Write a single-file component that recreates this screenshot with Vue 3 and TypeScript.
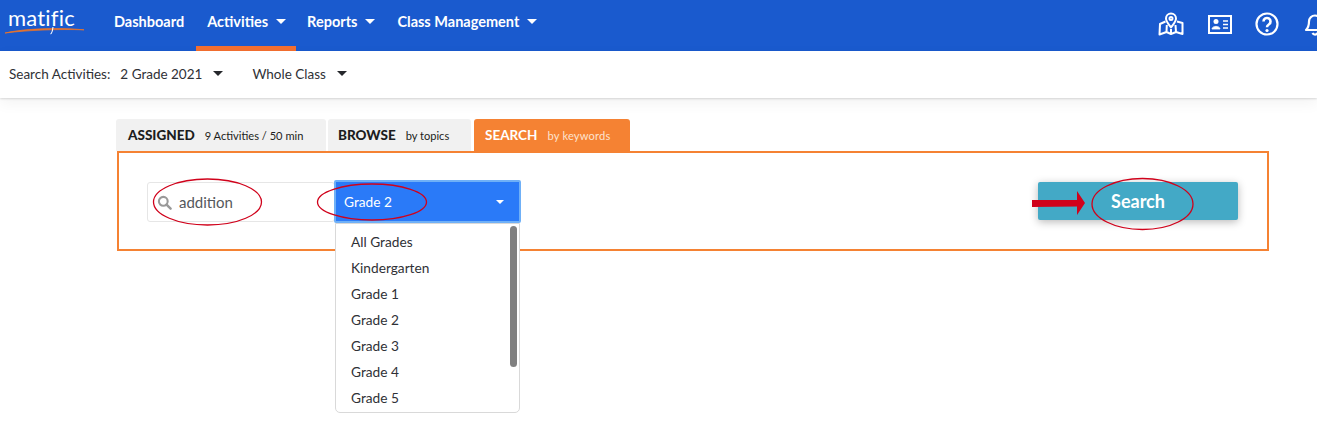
<script setup lang="ts">
const navItems: { label: string; caret: boolean; active: boolean }[] = [
  { label: 'Dashboard', caret: false, active: false },
  { label: 'Activities', caret: true, active: true },
  { label: 'Reports', caret: true, active: false },
  { label: 'Class Management', caret: true, active: false },
]
const grades: string[] = ['All Grades', 'Kindergarten', 'Grade 1', 'Grade 2', 'Grade 3', 'Grade 4', 'Grade 5']
</script>

<template>
  <div class="page">
    <header class="topbar">
      <div class="logo">
        <span class="logo-text">matific</span>
        <svg class="swoosh" width="84" height="14" viewBox="0 0 84 14" fill="none">
          <path d="M1 6 C 20 1.500, 55 0.500, 80 2.800 C 55 2, 25 3, 1 6 Z" fill="#e8732c" stroke="#e8732c" stroke-width="0.8" />
          <path d="M49 0 C48.500 4 48 6.500 46.500 7" stroke="#fff" stroke-width="1.100" />
        </svg>
      </div>
      <nav class="nav">
        <a v-for="item in navItems" :key="item.label" class="nav-item" :class="{ active: item.active }">
          {{ item.label }}
          <span v-if="item.caret" class="caret white"></span>
        </a>
      </nav>
      <div class="top-icons">
        <svg width="26" height="24" viewBox="0 0 26 24" fill="none" stroke="#fff" stroke-width="2" stroke-linejoin="round">
          <path d="M13 15.500 C10 11.500 8 9.500 8 6.500 a5 5 0 0 1 10 0 C18 9.500 16 11.500 13 15.500 Z" />
          <circle cx="13" cy="6.500" r="1.500" />
          <path d="M7.500 9.500 L2 12 L1.500 22.500 L8.500 20 L13 22 L18 20 L24.500 22 L24.500 11 L19 9.500 M8.500 20 L8.800 13 M18 20 L17.500 13 M13 22 L13 17" />
        </svg>
        <svg width="24" height="19" viewBox="0 0 24 19" fill="none" stroke="#fff">
          <rect x="1" y="1" width="22" height="17" stroke-width="2" />
          <circle cx="8" cy="6.500" r="2.500" fill="#fff" stroke="none" />
          <path d="M4 14 C4 10.500 12 10.500 12 14 Z" fill="#fff" stroke-width="0.800" />
          <path d="M15 6 H20 M15 9.500 H20 M15 13 H20" stroke-width="1.400" />
        </svg>
        <svg width="24" height="24" viewBox="0 0 24 24" fill="none" stroke="#fff" stroke-width="2.200">
          <circle cx="12" cy="12" r="10.500" />
          <path d="M8.500 9.500 a3.500 3.500 0 1 1 5.300 3 c-1.200 .8 -1.800 1.300 -1.800 2.800" stroke-width="2.600" />
          <circle cx="12" cy="18.500" r="1.600" fill="#fff" stroke="none" />
        </svg>
        <svg class="bell" width="24" height="24" viewBox="0 0 24 24" fill="none" stroke="#fff" stroke-width="2.200" stroke-linejoin="round">
          <path d="M3 18 C6 15 6 12 6 9.500 a6 6 0 0 1 12 0 C18 12 18 15 21 18 Z" />
          <path d="M9.500 21 a2.800 2.800 0 0 0 5 0" />
        </svg>
      </div>
    </header>

    <div class="subbar">
      <span class="sub-label">Search Activities:</span>
      <span class="sub-select first">2 Grade 2021<span class="caret dark"></span></span>
      <span class="sub-select">Whole Class<span class="caret dark"></span></span>
    </div>

    <main class="content">
      <div class="tabs">
        <div class="tab assigned"><b>ASSIGNED</b><small>9 Activities / 50 min</small></div>
        <div class="tab browse"><b>BROWSE</b><small>by topics</small></div>
        <div class="tab search"><b>SEARCH</b><small>by keywords</small></div>
      </div>
      <section class="panel">
        <div class="input">
          <svg width="15" height="15" viewBox="0 0 16 16" fill="none" stroke="#999" stroke-width="2.200">
            <circle cx="6.700" cy="6.700" r="4.700" />
            <path d="M10.200 10.200 L14.500 14.500" stroke-width="2.600" stroke-linecap="round" />
          </svg>
          <span>addition</span>
        </div>
        <div class="select-wrap">
          <div class="select">
            <span>Grade 2</span>
            <span class="caret small"></span>
          </div>
          <div class="menu">
            <div v-for="g in grades" :key="g" class="menu-item">{{ g }}</div>
            <div class="scrollbar"></div>
          </div>
        </div>
        <button class="search-btn">Search</button>
      </section>
    </main>

    <svg class="annot" width="1317" height="442" viewBox="0 0 1317 442" fill="none" stroke="#d0021b" stroke-width="1.300">
      <ellipse cx="207.500" cy="202" rx="54" ry="23" />
      <ellipse cx="372" cy="202" rx="54.500" ry="18" />
      <ellipse cx="1142.500" cy="204" rx="50.500" ry="25.500" />
      <path d="M1032 200 H1077 V191 L1085 203 L1077 215 V206.500 L1032 207 Z" fill="#d0021b" stroke="none" />
    </svg>
  </div>
</template>

<style>
html, body { margin: 0; background: #fff; }
</style>

<style scoped>
.page {
  position: relative;
  width: 1317px;
  height: 442px;
  overflow: hidden;
  background: #fff;
  font-family: Lato, "Open Sans", sans-serif;
  color: #2f3136;
}
.topbar {
  height: 51px;
  background: #1a5ace;
  display: flex;
  align-items: stretch;
  color: #fff;
}
.logo { position: relative; width: 114px; flex: none; }
.logo-text {
  position: absolute;
  left: 8px;
  top: 3px;
  font-size: 22px;
  font-weight: 400;
  letter-spacing: 0.2px;
  line-height: 30px;
}
.swoosh { position: absolute; left: 4px; top: 27px; }
.nav { display: flex; }
.nav-item {
  display: flex;
  align-items: center;
  gap: 8px;
  height: 43px;
  padding: 0 11px 3px;
  font-size: 14.500px;
  font-weight: 700;
  border-bottom: 5px solid transparent;
}
.nav-item:first-child { padding-left: 0; padding-right: 12px; }
.nav-item.active { border-bottom-color: #f46f30; padding-right: 10px; }
.caret { display: inline-block; width: 0; height: 0; border-left: 5px solid transparent; border-right: 5px solid transparent; border-top: 5px solid #fff; }
.caret.dark { border-top-color: #26282c; }
.caret.small { border-left-width: 4px; border-right-width: 4px; border-top-width: 4px; }
.top-icons {
  margin-left: auto;
  display: flex;
  align-items: center;
  gap: 23.500px;
  width: 159px;
  flex: none;
  margin-top: -3px;
}
.top-icons svg { flex: none; }
.subbar {
  height: 45px;
  padding-bottom: 2px;
  display: flex;
  align-items: center;
  padding-left: 9px;
  font-size: 13.500px;
  box-shadow: 0 1px 2px rgba(0, 0, 0, 0.14), 0 5px 14px rgba(0, 0, 0, 0.05);
  position: relative;
}
.sub-select { display: flex; align-items: center; gap: 11px; margin-left: 28px; }
.sub-select.first { margin-left: 10px; margin-right: 1px; }
.content { padding: 21px 48px 0 117px; }
.tabs { display: flex; gap: 2px; height: 32px; margin-left: -1px; }
.tab {
  display: flex;
  align-items: center;
  gap: 10px;
  padding-left: 12px;
  background: #f1f1f1;
  border-radius: 3px 3px 0 0;
  box-sizing: border-box;
  color: #1c1d20;
}
.tab b { font-size: 13.500px; font-weight: 900; }
.tab small { font-size: 11.100px; }
.assigned { width: 210px; }
.browse { width: 143px; padding-left: 10px; }
.search { width: 156px; margin-left: 1px; background: #f58233; color: #fff; padding-left: 11px; }
.search b { font-weight: 700; }
.search small { color: #fde3cf; letter-spacing: 0.2px; }
.panel {
  height: 100px;
  box-sizing: border-box;
  border: 2px solid #f58233;
  display: flex;
  align-items: flex-start;
  padding: 29px 29px 0 28px;
}
.input {
  width: 188px;
  height: 40px;
  flex: none;
  box-sizing: border-box;
  border: 1px solid #e6e6e6;
  border-radius: 3px;
  display: flex;
  align-items: center;
  gap: 7px;
  padding-left: 9px;
  font-size: 15px;
  color: #55585c;
}
.select-wrap { position: relative; width: 187px; margin-left: -1px; margin-top: -2px; flex: none; z-index: 2; }
.select {
  height: 43px;
  box-sizing: border-box;
  background: #2a7af8;
  border: 2px solid #6fb0f7;
  border-radius: 2px;
  color: #fff;
  display: flex;
  align-items: center;
  justify-content: space-between;
  padding: 0 15px 0 8px;
  font-size: 13.700px;
}
.menu {
  position: absolute;
  left: 1px;
  top: 43px;
  width: 185px;
  height: 190px;
  box-sizing: border-box;
  border: 1px solid #d9d9d9;
  border-radius: 0 0 5px 5px;
  background: #fff;
  padding-top: 5px;
  overflow: hidden;
}
.menu-item { height: 26px; line-height: 26px; padding-left: 15px; font-size: 13.700px; }
.scrollbar {
  position: absolute;
  right: 2px;
  top: 2px;
  width: 7px;
  height: 141px;
  background: #808080;
  border-radius: 4px;
}
.search-btn {
  margin-left: auto;
  width: 200px;
  height: 38px;
  border: 0;
  border-radius: 2px;
  background: #43a9c6;
  box-shadow: 0 2px 8px rgba(0, 0, 0, 0.28);
  color: #fff;
  font-family: inherit;
  font-size: 18px;
  font-weight: 700;
  padding: 0 0 1px;
  flex: none;
}
.annot { position: absolute; left: 0; top: 0; pointer-events: none; z-index: 5; }
</style>
